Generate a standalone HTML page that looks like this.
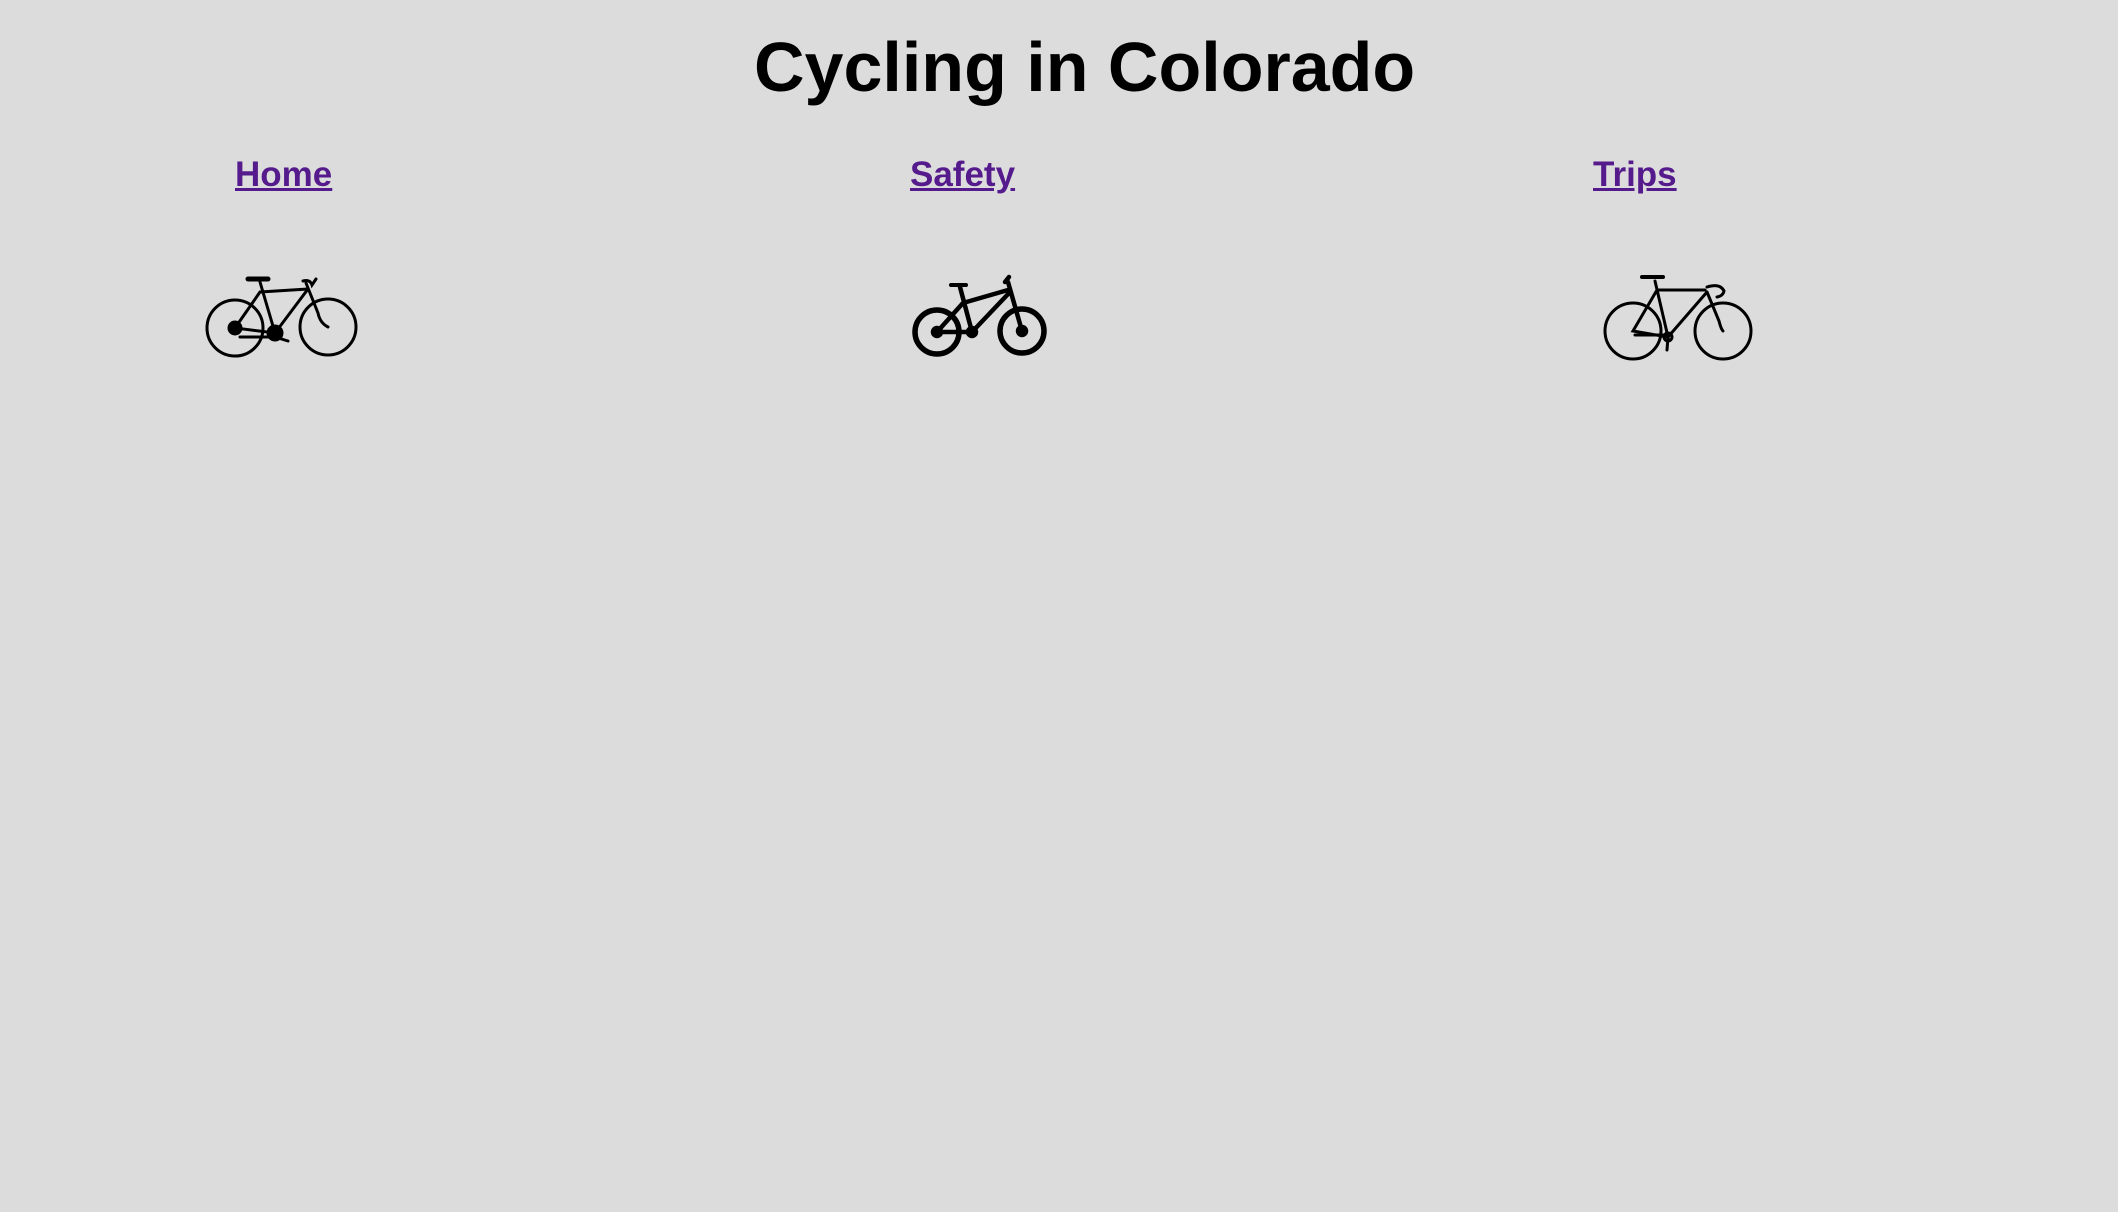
<!DOCTYPE html>
<html><head><meta charset="utf-8"><style>
html,body{margin:0;padding:0;background:#dcdcdc;width:2118px;height:1212px;overflow:hidden;font-family:"Liberation Sans",Arial,sans-serif}
.t{position:absolute;left:754px;top:22px;font-size:70px;font-weight:bold;color:#000;line-height:90px;white-space:nowrap}
a{position:absolute;font-size:35px;font-weight:bold;color:#551a8b;text-decoration:underline;line-height:40px;white-space:nowrap}
svg{position:absolute}
</style></head><body>
<div class="t">Cycling in Colorado</div>
<a style="left:235px;top:155px">Home</a>
<a style="left:910px;top:155px">Safety</a>
<a style="left:1593px;top:155px">Trips</a>

<svg style="left:200px;top:265px" width="165" height="105" viewBox="0 0 165 105" fill="none" stroke="#000" stroke-width="3" stroke-linecap="round">
<circle cx="35" cy="63" r="28"/><circle cx="128" cy="62" r="28"/>
<path d="M60 17 L75 68 L35 63 L60 27 M60 27 L108 24 M108 24 L75 68 M106 18 L118 48 Q120 58 128 62"/>
<path d="M48 14 H68" stroke-width="5"/>
<path d="M103 16 Q110 14 112 20 L116 14"/>
<circle cx="35" cy="63" r="6" fill="#000"/><circle cx="75" cy="68" r="7" fill="#000"/>
<path d="M40 72 H70 M75 72 L88 76"/>
</svg>

<svg style="left:905px;top:270px" width="150" height="95" viewBox="0 0 150 95" fill="none" stroke="#000" stroke-width="4.5" stroke-linecap="round">
<circle cx="32" cy="62" r="22" stroke-width="5.5"/><circle cx="117" cy="61" r="22" stroke-width="5.5"/>
<circle cx="32" cy="62" r="4"/><circle cx="117" cy="61" r="4"/>
<path d="M55 17 L67 62 L32 62 L58 33 M58 33 L103 20 M105 22 L67 62 M103 12 L117 61"/>
<path d="M46 15 H61" stroke-width="4"/>
<path d="M100 12 L104 7"/>
<circle cx="67" cy="62" r="4" fill="#000"/>
</svg>

<svg style="left:1595px;top:265px" width="170" height="105" viewBox="0 0 170 105" fill="none" stroke="#000" stroke-width="3" stroke-linecap="round">
<circle cx="38" cy="66" r="28"/><circle cx="128" cy="66" r="28"/>
<path d="M60 16 L73 72 L38 66 L62 25 M62 25 L110 25 M112 27 L73 72 M112 27 L124 56 Q126 64 128 66"/>
<path d="M47 12 H68" stroke-width="4"/>
<path d="M112 22 Q125 18 129 26 Q128 31 122 32" stroke-width="3"/>
<circle cx="73" cy="72" r="4"/><path d="M73 72 L72 85 M40 70 H70"/>
</svg>
</body></html>
